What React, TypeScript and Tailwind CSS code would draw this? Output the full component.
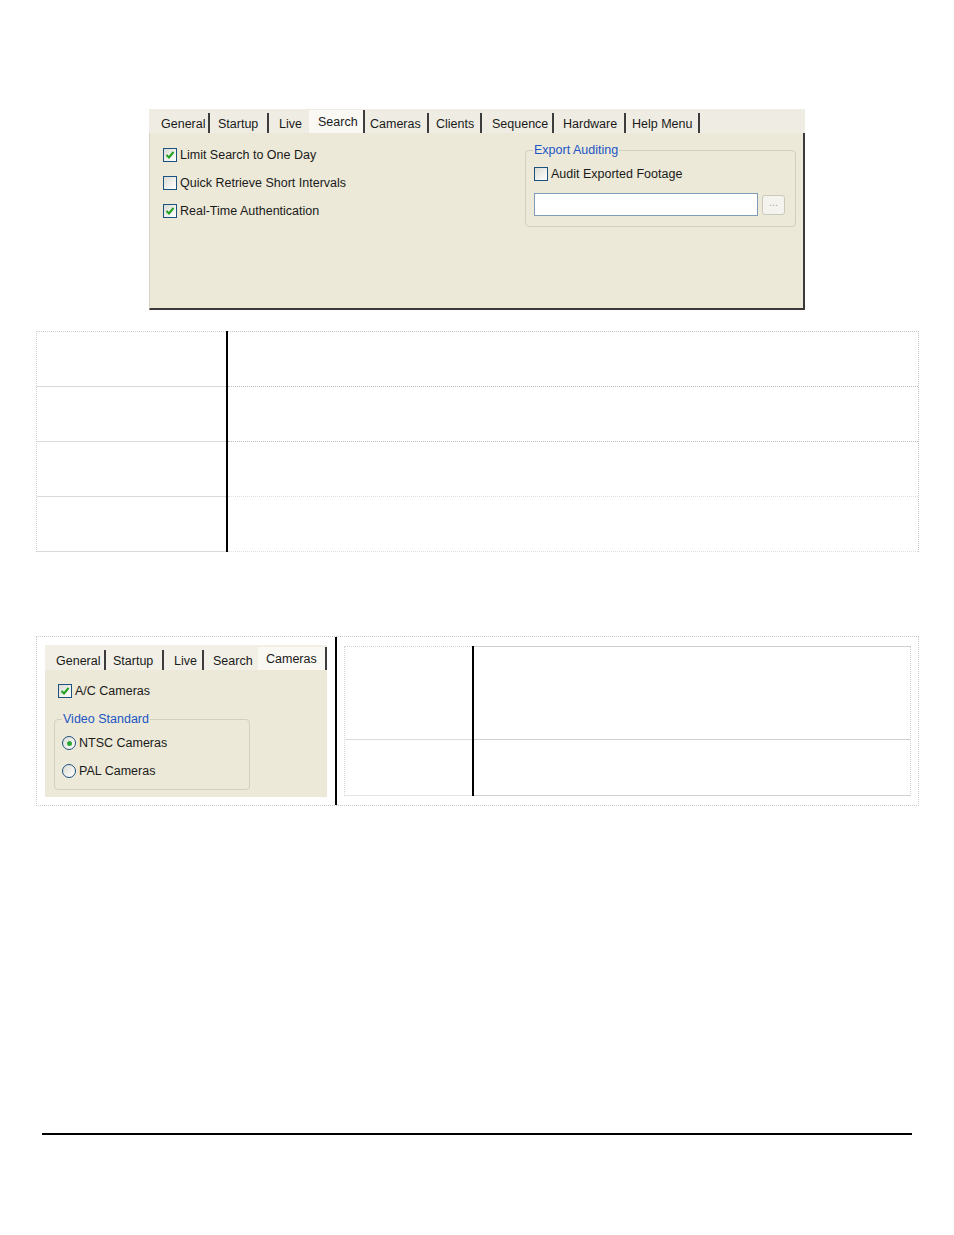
import React from 'react';

const font = "font-['Liberation_Sans',Arial,sans-serif]";

type TabDef = { label: string; cls: string; active?: boolean; sep?: boolean };

const searchTabs: TabDef[] = [
  { label: 'General', cls: 'w-[57px] pl-[8px]', sep: true },
  { label: 'Startup', cls: 'w-[59px] pl-[8px]', sep: true },
  { label: 'Live', cls: 'w-[40px] pl-[10px]' },
  { label: 'Search', cls: 'w-[56px] pl-[9px]', active: true, sep: true },
  { label: 'Cameras', cls: 'w-[64px] pl-[5px]', sep: true },
  { label: 'Clients', cls: 'w-[53px] pl-[7px]', sep: true },
  { label: 'Sequence', cls: 'w-[72px] pl-[10px]', sep: true },
  { label: 'Hardware', cls: 'w-[72px] pl-[9px]', sep: true },
  { label: 'Help Menu', cls: 'w-[74px] pl-[6px]', sep: true },
];

const cameraTabs: TabDef[] = [
  { label: 'General', cls: 'w-[58px] pl-[8px]', sep: true },
  { label: 'Startup', cls: 'w-[58px] pl-[7px]', sep: true },
  { label: 'Live', cls: 'w-[40px] pl-[10px]', sep: true },
  { label: 'Search', cls: 'w-[54px] pl-[9px]' },
  { label: 'Cameras', cls: 'w-[69px] pl-[8px]', active: true, sep: true },
];

const Tab: React.FC<{ tab: TabDef }> = ({ tab }) => (
  <div
    className={`flex shrink-0 items-center text-[12.5px] leading-[14px] text-[#1a1a1a] ${tab.cls} ${
      tab.active ? 'h-[23px] bg-[#f9f8f3] pt-[1px]' : 'h-[20px] pt-[2px]'
    } ${tab.sep ? 'border-r-2 border-[#3c3c3c]' : ''}`}
  >
    {tab.label}
  </div>
);

const CheckBox: React.FC<{ checked?: boolean }> = ({ checked }) => (
  <span className="flex h-[14px] w-[14px] shrink-0 items-center justify-center border border-[#1c5180] bg-linear-to-br from-[#dcdcd4] to-white">
    {checked && (
      <svg width="10" height="10" viewBox="0 0 10 10">
        <path d="M1.5 5 L4 7.5 L8.5 2" stroke="#21a121" strokeWidth="2" fill="none" />
      </svg>
    )}
  </span>
);

const Radio: React.FC<{ checked?: boolean }> = ({ checked }) => (
  <span className="flex h-[14px] w-[14px] shrink-0 items-center justify-center rounded-full border border-[#1c5180] bg-linear-to-br from-[#dcdcd4] to-white">
    {checked && <span className="h-[5px] w-[5px] rounded-full bg-[#2fa83a]" />}
  </span>
);

const Option: React.FC<{ label: string; checked?: boolean; radio?: boolean; className?: string }> = ({
  label,
  checked,
  radio,
  className = '',
}) => (
  <div className={`flex h-[14px] items-center gap-[3px] text-[12.5px] leading-[14px] text-[#1a1a1a] ${className}`}>
    {radio ? <Radio checked={checked} /> : <CheckBox checked={checked} />}
    <span>{label}</span>
  </div>
);

const SearchPanel: React.FC = () => (
  <div className="ml-[149px] mt-[109px] w-[656px]">
    <div className="flex h-[24px] items-end bg-[#efede3] pl-[4px]">
      {searchTabs.map((t) => (
        <Tab key={t.label} tab={t} />
      ))}
    </div>
    <div className="flex h-[177px] border-b-2 border-l border-r-2 border-[#3a3a3a] border-l-[#d6d3c4] bg-[#ece9d8]">
      <div className="flex w-[375px] flex-col gap-[14px] pl-[13px] pt-[15px]">
        <Option label="Limit Search to One Day" checked />
        <Option label="Quick Retrieve Short Intervals" />
        <Option label="Real-Time Authentication" checked />
      </div>
      <fieldset className="mt-[10px] h-[84px] w-[271px] rounded-[4px] border border-[#d0d0bf] pl-[8px]">
        <legend className="-ml-[1px] px-[1px] text-[12.5px] leading-[14px] text-[#2155c4]">Export Auditing</legend>
        <Option label="Audit Exported Footage" className="mt-[10px]" />
        <div className="mt-[12px] flex items-center gap-[4px]">
          <div className="h-[23px] w-[224px] border border-[#7f9db9] bg-white" />
          <div className="flex h-[20px] w-[23px] items-center justify-center rounded-[3px] border border-[#cbc9bc] bg-[#f4f3ee] pb-[4px] text-[11px] text-[#aca899]">
            ...
          </div>
        </div>
      </fieldset>
    </div>
  </div>
);

const CamerasPanel: React.FC = () => (
  <div className="w-[282px] bg-[#ece9d8]">
    <div className="flex h-[25px] items-end bg-[#f1efe6] pl-[3px]">
      {cameraTabs.map((t) => (
        <Tab key={t.label} tab={t} />
      ))}
    </div>
    <div className="h-[127px] pl-[13px] pt-[14px]">
      <Option label="A/C Cameras" checked />
      <fieldset className="-ml-[4px] mt-[14px] h-[78px] w-[196px] rounded-[4px] border border-[#d0d0bf] pl-[7px]">
        <legend className="px-[1px] text-[12.5px] leading-[14px] text-[#2155c4]">Video Standard</legend>
        <Option label="NTSC Cameras" radio checked className="mt-[10px]" />
        <Option label="PAL Cameras" radio className="mt-[14px]" />
      </fieldset>
    </div>
  </div>
);

const App: React.FC = () => {
  const leftRow = 'h-[55px] border-b border-[#d9d9d9]';
  const rightRow = 'h-[55px] border-b border-dotted border-[#bdbdbd]';
  return (
    <div className={`flex h-[1235px] w-[954px] flex-col bg-white ${font}`}>
      <SearchPanel />

      {/* first option table */}
      <div className="ml-[36px] mt-[21px] flex w-[883px]">
        <div className="w-[190px] border-l border-t border-dotted border-[#d0d0d0]">
          <div className={leftRow} />
          <div className={leftRow} />
          <div className={leftRow} />
          <div className={leftRow} />
        </div>
        <div className="w-[2px] bg-black" />
        <div className="flex-1 border-r border-t border-dotted border-[#c4c4c4]">
          <div className={rightRow} />
          <div className={rightRow} />
          <div className={`${rightRow} border-dashed border-[#e0e0e0]`} />
          <div className={`${rightRow} border-dashed border-[#e0e0e0]`} />
        </div>
      </div>

      {/* second option table */}
      <div className="ml-[36px] mt-[84px] flex h-[170px] w-[883px] border border-dotted border-[#c8c8c8]">
        <div className="w-[298px] pl-[8px] pt-[8px]">
          <CamerasPanel />
        </div>
        <div className="w-[2px] bg-black" />
        <div className="flex-1 pl-[7px] pr-[7px] pt-[9px]">
          <div className="flex h-[150px]">
            <div className="w-[128px] border-l border-t border-dotted border-[#d6d6d6]">
              <div className="h-[93px] border-b border-[#dcdcdc]" />
              <div className="h-[56px] border-b border-[#e4e4e4]" />
            </div>
            <div className="w-[2px] bg-black" />
            <div className="flex-1 border-r border-dotted border-[#cfcfcf]">
              <div className="h-[1px] bg-[#cfcfcf]" />
              <div className="h-[93px] border-b border-[#cfcfcf]" />
              <div className="h-[56px] border-b border-[#cfcfcf]" />
            </div>
          </div>
        </div>
      </div>

      <div className="ml-[42px] mt-[327px] h-[1.5px] w-[870px] bg-black" />
    </div>
  );
};

export default App;
